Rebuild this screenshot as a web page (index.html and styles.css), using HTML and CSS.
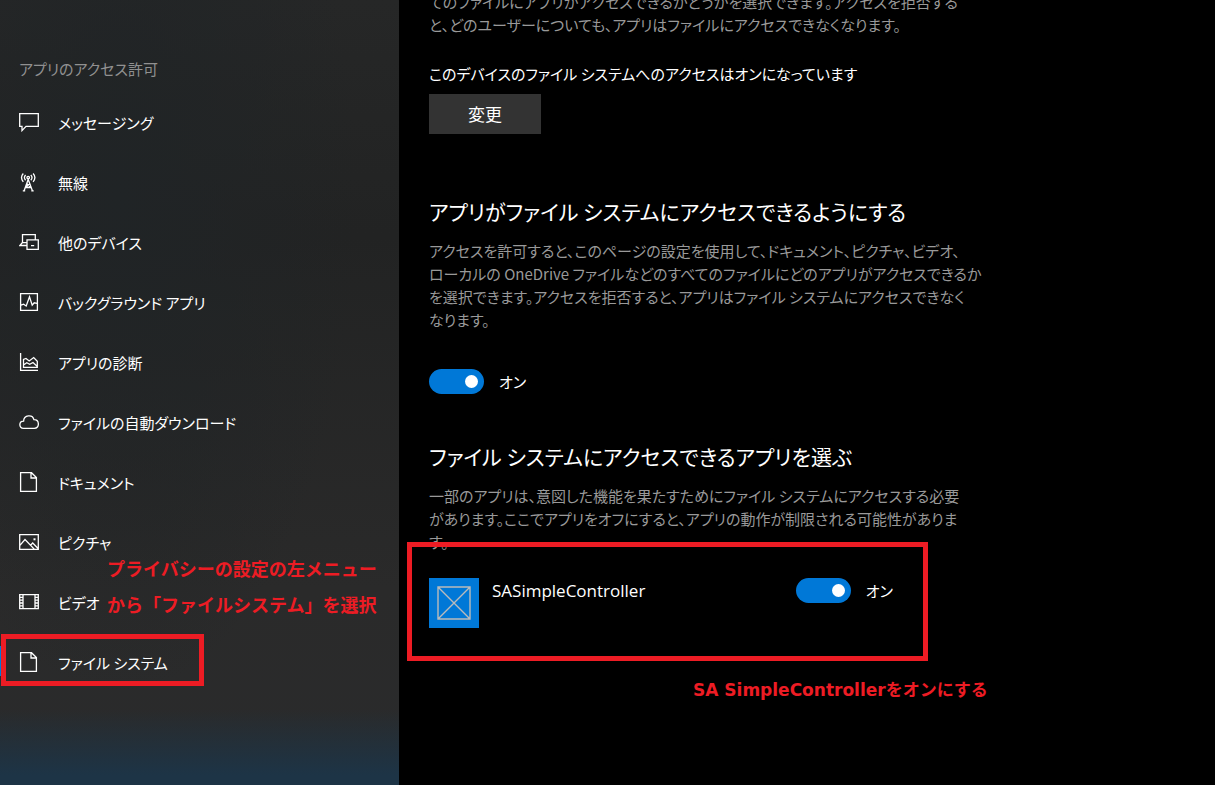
FILE: index.html
```html
<!DOCTYPE html>
<html lang="ja">
<head>
<meta charset="utf-8">
<title>設定 - ファイル システム</title>
<link rel="stylesheet" href="styles.css">
</head>
<body>
<div class="layout">
  <nav class="sidebar" aria-labelledby="nav-title">
    <h2 class="nav-title" id="nav-title">アプリのアクセス許可</h2>
    <ul class="nav-list">
      <li><a class="nav-item" href="#"><svg class="icon" viewBox="0 0 20 20"><path d="M.7 1.6H19.3V14.4H7L3 18.6V14.4H.7Z"/></svg>メッセージング</a></li>
      <li><a class="nav-item" href="#"><svg class="icon" viewBox="0 0 20 20"><path d="M5 19 9.200 7.500 13.500 19M3.800 18.800H6.200M12.300 18.800H14.700M6.500 15.500 11 11.500M12 15.500 7.700 11.500M6.200 15.500H12.300M4.300 1.500Q.7 5.500 4.300 9.800M14.100 1.500Q17.700 5.500 14.100 9.800M6.600 3Q4.200 5.600 6.600 8.300M11.800 3Q14.200 5.600 11.800 8.300"/><circle cx="9.200" cy="5.600" r="1.300"/></svg>無線</a></li>
      <li><a class="nav-item" href="#"><svg class="icon" viewBox="0 0 20 20"><path d="M3.500 11V2.600H16.300V7.800M3.500 10.500.8 13.500H7.800M3 10.600H7.800M8 7.800H19.300V17.400H8ZM12 13.600H15.200"/></svg>他のデバイス</a></li>
      <li><a class="nav-item" href="#"><svg class="icon" viewBox="0 0 20 20"><path d="M1.600 1.600H18.400V18.400H1.600ZM2 13.200 4.600 12.200 7.200 14 10.500 4.800 13.200 13.200 15.200 10.800 18 11.400"/></svg>バックグラウンド アプリ</a></li>
      <li><a class="nav-item" href="#"><svg class="icon" viewBox="0 0 20 20"><path d="M1.600 1V18.400H19M4.500 15.300V7.500L7 6.500 10.200 9 14.700 5.500 18.300 9.200V15.300ZM4.500 13 7.800 10.700 10.700 12.300 14 10.500 18.300 14.500"/></svg>アプリの診断</a></li>
      <li><a class="nav-item" href="#"><svg class="icon" viewBox="0 0 20 20"><path d="M4.500 16.400C-.4 16.400-.4 9.300 4.600 9.200 4.800 2.600 13.700 2 14.900 7.700 20.700 7.600 20.900 16.300 15.300 16.400Z"/></svg>ファイルの自動ダウンロード</a></li>
      <li><a class="nav-item" href="#"><svg class="icon" viewBox="0 0 20 20"><path d="M1.600.7H12.500L17.400 5.600V19.300H1.600ZM12 .7V6H17.400"/></svg>ドキュメント</a></li>
      <li><a class="nav-item" href="#"><svg class="icon" viewBox="0 0 20 20"><path d="M.7 2.600H19.300V17.400H.7ZM.7 13.600 6 7.500 15.500 17.400M11.500 13.200 13.700 11 19.300 16.700"/><path class="dot" d="M14.500 6.300H16.500V8.300H14.500Z"/></svg>ピクチャ</a></li>
      <li><a class="nav-item" href="#"><svg class="icon" viewBox="0 0 20 20"><path d="M.7 2.600H19.300V16.600H.7ZM4 2.600V16.600M16 2.600V16.600M1 5.400H3.700M1 8.200H3.700M1 11H3.700M1 13.800H3.700M16.300 5.400H19M16.300 8.200H19M16.300 11H19M16.300 13.800H19"/></svg>ビデオ</a>
        <p class="note note-menu">プライバシーの設定の左メニュー<br>から「ファイルシステム」を選択</p></li>
      <li><a class="nav-item current" href="#" aria-current="page"><svg class="icon" viewBox="0 0 20 20"><path d="M1.600.7H12.500L17.400 5.600V19.300H1.600ZM12 .7V6H17.400"/></svg>ファイル システム</a></li>
    </ul>
  </nav>
  <main class="content">
    <p class="description scrolled">てのファイルにアプリがアクセスできるかどうかを選択できます。アクセスを拒否する<br>と、どのユーザーについても、アプリはファイルにアクセスできなくなります。</p>
    <p class="status">このデバイスのファイル システムへのアクセスはオンになっています</p>
    <button class="change" type="button">変更</button>

    <h1 class="heading">アプリがファイル システムにアクセスできるようにする</h1>
    <p class="description">アクセスを許可すると、このページの設定を使用して、ドキュメント、ピクチャ、ビデオ、<br>ローカルの OneDrive ファイルなどのすべてのファイルにどのアプリがアクセスできるか<br>を選択できます。アクセスを拒否すると、アプリはファイル システムにアクセスできなく<br>なります。</p>
    <label class="switch switch-main"><input class="toggle" type="checkbox" role="switch" checked>オン</label>

    <h1 class="heading heading-apps">ファイル システムにアクセスできるアプリを選ぶ</h1>
    <p class="description">一部のアプリは、意図した機能を果たすためにファイル システムにアクセスする必要<br>があります。ここでアプリをオフにすると、アプリの動作が制限される可能性がありま<br>す。</p>
    <div class="app">
      <svg class="app-icon" viewBox="0 0 50 50"><path d="M9 9H41V41H9ZM9 9 41 41M41 9 9 41"/></svg>
      <span class="app-name" id="app-name">SASimpleController</span>
      <label class="switch"><input class="toggle" type="checkbox" role="switch" aria-describedby="app-name" checked>オン</label>
      <p class="note note-app">SA SimpleControllerをオンにする</p>
    </div>
  </main>
</div>
</body>
</html>
```

FILE: styles.css
```css
*, *::before, *::after { box-sizing: border-box; }

body {
  margin: 0;
  background: #000;
  color: #fff;
  font-family: "Noto Sans CJK JP", sans-serif;
  font-size: 15px;
  line-height: 23px;
  font-feature-settings: "palt";
}

p, h1, h2, ul { margin: 0; padding: 0; }

.layout {
  display: flex;
  min-height: 100vh;
  overflow: hidden;
}

.sidebar {
  flex: 0 0 399px;
  padding-top: 46px;
  background:
    linear-gradient(to bottom, transparent calc(100% - 75px), #1d3446 calc(100% - 10px)),
    radial-gradient(ellipse at 30% 25%, #202426, transparent 60%),
    linear-gradient(#262727, #222323 30%, #2a2a2a 75%, #2a2b2c);
}

.nav-title {
  padding: 11px 19px 12px;
  color: #919191;
  font-size: 15px;
  font-weight: 400;
}

.nav-list { list-style: none; }
.nav-list li { position: relative; }

.nav-item {
  display: flex;
  align-items: center;
  gap: 19px;
  height: 60px;
  padding-left: 19px;
  color: #fff;
  text-decoration: none;
  white-space: nowrap;
}

.icon {
  width: 20px;
  height: 20px;
  fill: none;
  stroke: #fff;
  stroke-width: 1.3;
}

.icon .dot { fill: #fff; stroke: none; }

.current::before {
  content: "";
  position: absolute;
  left: 0;
  top: 14px;
  width: 4px;
  height: 30px;
  background: #0078d7;
}

.current::after {
  content: "";
  position: absolute;
  left: 1px;
  top: 2px;
  width: 203px;
  height: 52px;
  border: 5px solid #ed1c24;
}

.content {
  flex: 1;
  min-width: 0;
  padding-left: 30px;
  white-space: nowrap;
}

.description { color: #999; }
.scrolled { margin-top: -10px; }
.status { margin-top: 26px; }

.change {
  display: block;
  margin-top: 9px;
  padding: 8px 39px;
  border: 0;
  background: #333;
  color: #fff;
  font: inherit;
  font-size: 17px;
  line-height: 24px;
}

.heading {
  margin: 61px 0 12px;
  font-size: 21px;
  font-weight: 400;
  line-height: 32px;
}

.heading-apps { margin-top: 46px; }

.switch {
  display: flex;
  align-items: center;
  gap: 15px;
}

.switch-main { margin-top: 38px; }

.toggle {
  appearance: none;
  width: 55px;
  height: 25px;
  margin: 0;
  padding: 6px 6px 6px 36px;
  border-radius: 13px;
  background: #0078d7;
}

.toggle::before {
  content: "";
  display: block;
  width: 13px;
  height: 13px;
  border-radius: 50%;
  background: #fff;
}

.app {
  position: relative;
  display: flex;
  align-items: flex-start;
  gap: 13px;
  width: 464px;
  height: 50px;
  margin-top: 25px;
}

.app::after {
  content: "";
  position: absolute;
  left: -22px;
  top: -36px;
  width: 521px;
  height: 119px;
  border: 5px solid #ed1c24;
  pointer-events: none;
}

.app-icon {
  width: 50px;
  height: 50px;
  background: #0078d7;
  fill: none;
  stroke: #bbb;
  stroke-width: 1.4;
}

.app-name {
  flex: 1;
  font-family: "Open Sans", "Noto Sans", sans-serif;
  font-size: 17px;
  line-height: 25px;
}

.note {
  position: absolute;
  color: #ed1c24;
  font-family: "DejaVu Sans", "Noto Sans CJK JP", sans-serif;
  font-size: 18px;
  font-weight: 700;
  line-height: 36px;
  white-space: nowrap;
  font-feature-settings: normal;
}

.note-menu { left: 107px; top: -20px; }
.note-app { left: 264px; top: 94px; font-size: 17px; }
```
